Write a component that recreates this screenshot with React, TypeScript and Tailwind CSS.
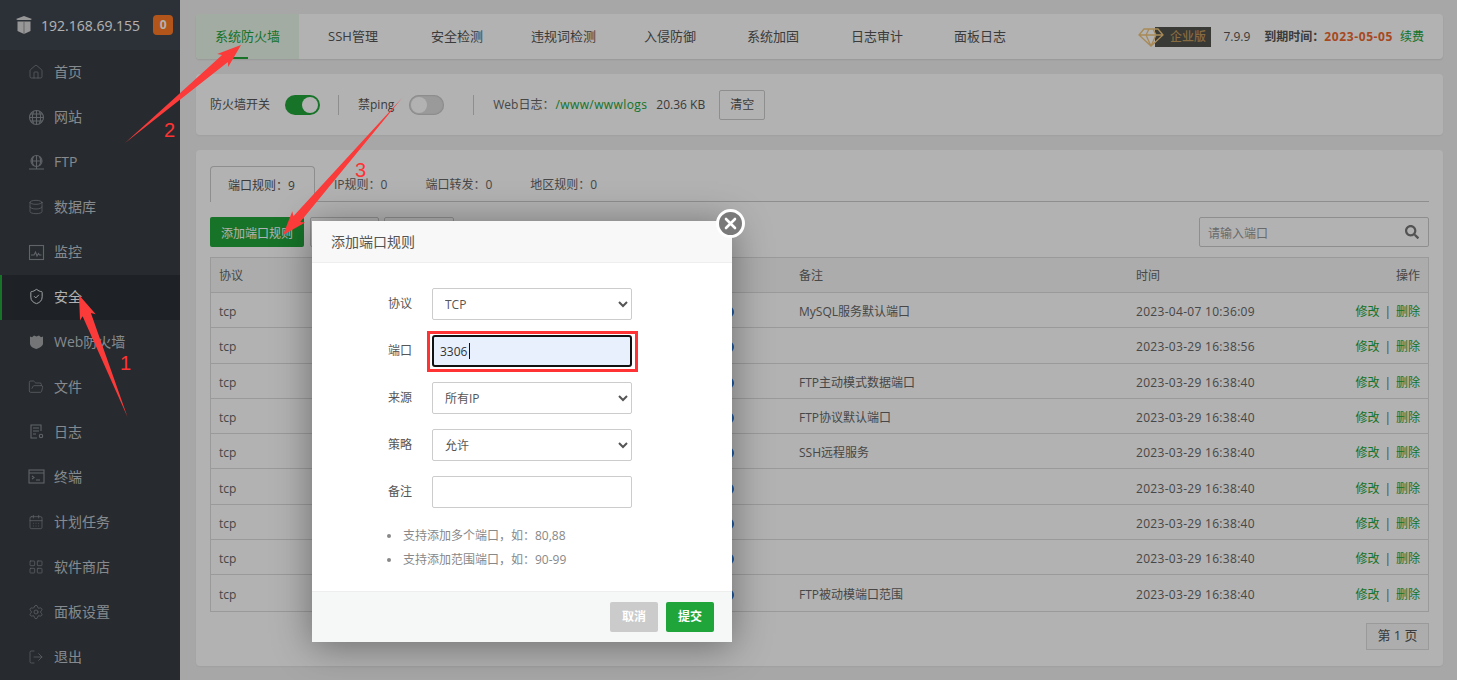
import React from "react";
import { Home, Globe, Database, ShieldCheck, FolderOpen, CalendarDays, LayoutGrid, Settings, LogOut } from "lucide-react";
import { FaSearch } from "react-icons/fa";

const ic = { size: 16, strokeWidth: 1.1, color: "#8a9097" };

const S = ({ children }: { children: React.ReactNode }) => (
  <svg width="17" height="17" viewBox="0 0 17 17" fill="none" stroke="#8a9097" strokeWidth="1.1">{children}</svg>
);

const nav: [React.ReactNode, string, boolean?][] = [
  [<Home {...ic} />, "首页"],
  [<S><circle cx="8.5" cy="8.5" r="7" /><path d="M1.500 8.500h14M8.500 1.500v14M2.500 5h12M2.500 12h12M5.500 2.500c-1.500 4-1.500 8 0 12M11.500 2.500c1.500 4 1.500 8 0 12" /></S>, "网站"],
  [<S><circle cx="8.5" cy="7" r="5.5" /><path d="M3 7h11M8.500 1.500v11M5.500 2.500c-1.500 3-1.500 6 0 9M11.500 2.500c1.500 3 1.500 6 0 9M1 15h15M8.500 12.500V15" /></S>, "FTP"],
  [<Database {...ic} />, "数据库"],
  [<S><rect x="1.5" y="1.5" width="14" height="14" /><path d="M3 11h3l1.500-3 1.500 4 1.500-2.500 1 1.500h2" /></S>, "监控"],
  [<ShieldCheck size={17} strokeWidth={1.4} color="#e8ecef" />, "安全", true],
  [<svg width="17" height="17" viewBox="0 0 17 17" fill="#a6a8aa"><path d="M2 3.500 4 4.200 6 2.500l2.500 1L11 2.500l2 1.700 2-.7v7c0 2.500-3.500 4.500-6.500 5.500C5.500 15.500 2 13.500 2 10.500z" /></svg>, "Web防火墙"],
  [<FolderOpen {...ic} />, "文件"],
  [<S><path d="M13 8V2H3v13h6M5 5h6M5 8h6M5 11h3" /><circle cx="13" cy="13" r="1.700" /></S>, "日志"],
  [<S><rect x="1" y="2" width="15" height="13" /><path d="M1 5h15M4 8l2 1.500-2 1.500M8 12h4" /></S>, "终端"],
  [<CalendarDays {...ic} />, "计划任务"],
  [<LayoutGrid {...ic} />, "软件商店"],
  [<Settings {...ic} />, "面板设置"],
  [<LogOut {...ic} />, "退出"],
];

const topTabs: [string, string][] = [
  ["系统防火墙", "w-[103px]"],
  ["SSH管理", "w-[108px]"],
  ["安全检测", "w-[100px]"],
  ["违规词检测", "w-[113px]"],
  ["入侵防御", "w-[100px]"],
  ["系统加固", "w-[106px]"],
  ["日志审计", "w-[102px]"],
  ["面板日志", "w-[104px]"],
];

const rows: [string, string][] = [
  ["MySQL服务默认端口", "2023-04-07 10:36:09"],
  ["", "2023-03-29 16:38:56"],
  ["FTP主动模式数据端口", "2023-03-29 16:38:40"],
  ["FTP协议默认端口", "2023-03-29 16:38:40"],
  ["SSH远程服务", "2023-03-29 16:38:40"],
  ["", "2023-03-29 16:38:40"],
  ["", "2023-03-29 16:38:40"],
  ["", "2023-03-29 16:38:40"],
  ["FTP被动模端口范围", "2023-03-29 16:38:40"],
];

const cols = "grid grid-cols-[100px_200px_280px_337px_160px_1fr] items-center";

function arrow(tx: number, ty: number, hx: number, hy: number, headLen: number, headW: number, neck: number) {
  const d = Math.hypot(hx - tx, hy - ty);
  const ux = (hx - tx) / d, uy = (hy - ty) / d;
  const nx = -uy, ny = ux;
  const p = (along: number, side: number) => `${(hx - ux * along + nx * side).toFixed(1)},${(hy - uy * along + ny * side).toFixed(1)}`;
  return [`${tx},${ty}`, p(headLen - 3, neck / 2), p(headLen, headW / 2), `${hx},${hy}`, p(headLen, -headW / 2), p(headLen - 3, -neck / 2)].join(" ");
}

const Field = ({ label, children }: { label: string; children: React.ReactNode }) => (
  <div className="flex items-center">
    <label className="w-[100px] text-right text-[12px] text-[#555]">{label}</label>
    <div className="relative ml-[20px] h-[32px] w-[200px]">{children}</div>
  </div>
);

const selectCls = "h-[32px] w-[200px] rounded-[2px] border border-[#ccc] bg-white pl-[8px] text-[12px] text-[#555]";

export default function App() {
  return (
    <div className="relative flex h-[680px] w-[1457px] overflow-hidden bg-[#f0f0f0] font-['Open_Sans','Noto_Sans_CJK_SC',sans-serif] text-[12px] text-[#666]">
      <aside className="w-[180px] shrink-0 bg-[#383e44]">
        <div className="flex h-[50px] items-center bg-[#404650] pl-[15px]">
          <svg width="18" height="20" viewBox="0 0 18 20" fill="#d8d8d8">
            <path d="M1 4 9 1l8 3-1.500 1H2.500zM2.500 6.500h13V16L9 19l-6.500-3z" />
            <path d="M9 6.500V19" stroke="#7a7a7a" strokeWidth=".7" />
          </svg>
          <span className="ml-[8px] text-[14px] text-white">192.168.69.155</span>
          <span className="ml-[13px] flex h-[20px] w-[20px] items-center justify-center rounded-[4px] bg-[#ff7a26] text-[12px] font-bold text-white">0</span>
        </div>
        <nav className="flex flex-col">
          {nav.map(([icon, text, active]) => (
            <div key={text} className={active ? "flex h-[44.500px] items-center border-l-2 border-[#20a53a] bg-[#2b3035] pl-[26px]" : "flex h-[45px] items-center pl-[28px]"}>
              <span className="flex w-[26px] items-center pb-[1px]">{icon}</span>
              <span className={active ? "pb-[2px] text-[14px] text-white" : "pb-[2px] text-[14px] text-[#c0c6cc]"}>{text}</span>
            </div>
          ))}
        </nav>
      </aside>

      <main className="flex min-w-0 flex-1 flex-col gap-[15px] pl-[16px] pr-[14px] pt-[14px]">
        <section className="flex h-[45px] items-center rounded-[4px] bg-white shadow-[0_1px_2px_rgba(0,0,0,0.1)]">
          {topTabs.map(([t, w], i) => (
            <div key={t} className={i === 0 ? `relative flex h-full items-center justify-center rounded-l-[4px] bg-[#e8f6ea] text-[13px] text-[#20a53a] ${w}` : `flex h-full items-center justify-center text-[13px] text-[#555] ${w}`}>
              {t}
              {i === 0 && <span className="absolute bottom-0 left-[32px] h-[2px] w-[20px] bg-[#20a53a]" />}
            </div>
          ))}
          <div className="ml-auto flex items-center pr-[19px]">
            <div className="relative flex items-center">
              <svg className="relative z-10" width="26" height="20" viewBox="0 0 26 20" fill="none" stroke="#a88a58" strokeWidth="1.300">
                <path d="M6 2h14l5 6-12 11L1 8zM1 8h24M8 8l5 11 5-11-3-6h-4z" />
              </svg>
              <span className="ml-[-9px] flex h-[20px] w-[56px] items-center justify-center bg-[#52524c] pl-[9px] text-[12px] font-medium text-[#c09a5c]">企业版</span>
            </div>
            <span className="ml-[12px] text-[#555]">7.9.9</span>
            <span className="ml-[14px] font-bold text-[#555]">到期时间：</span>
            <span className="font-bold tracking-[0.6px] text-[#f0682e]">2023-05-05</span>
            <span className="ml-[7px] text-[#20a53a]">续费</span>
          </div>
        </section>

        <section className="flex h-[61px] items-center rounded-[4px] bg-white pl-[14px] shadow-[0_1px_2px_rgba(0,0,0,0.05)]">
          <span className="text-[#555]">防火墙开关</span>
          <span className="ml-[15px] flex h-[20px] w-[35px] items-center justify-end rounded-full bg-[#20a53a] pr-[2px]">
            <span className="h-[16px] w-[16px] rounded-full bg-white" />
          </span>
          <span className="ml-[18px] h-[20px] w-px bg-[#ccc]" />
          <span className="ml-[19px] text-[#555]">禁ping</span>
          <span className="ml-[15px] flex h-[20px] w-[35px] items-center rounded-full bg-[#ddd] pl-[2px] shadow-[inset_0_0_2px_rgba(0,0,0,0.3)]">
            <span className="h-[16px] w-[16px] rounded-full bg-white" />
          </span>
          <span className="ml-[29px] h-[20px] w-px bg-[#ccc]" />
          <span className="ml-[19px] text-[#666]">Web日志：</span>
          <span className="ml-[1px] tracking-[0.4px] text-[#20a53a]">/www/wwwlogs</span>
          <span className="ml-[9px] text-[#555]">20.36 KB</span>
          <button className="ml-[14px] h-[30px] w-[46px] rounded-[2px] border border-[#ccc] text-[12px] text-[#555]">清空</button>
        </section>

        <section className="h-[516px] rounded-[4px] bg-white px-[14px] pt-[16px] shadow-[0_1px_2px_rgba(0,0,0,0.05)]">
          <div className="flex h-[36px] border-b border-[#ccc]">
            <div className="mb-[-1px] flex h-[36px] w-[105px] items-center justify-center rounded-t-[4px] border border-b-0 border-[#ccc] bg-white pr-[2px] pt-[3px] text-[#555]">端口规则：9</div>
            <div className="flex items-center px-[19px] pt-[3px]">IP规则：0</div>
            <div className="flex items-center px-[19px] pt-[3px]">端口转发：0</div>
            <div className="flex items-center px-[19px] pt-[3px]">地区规则：0</div>
          </div>

          <div className="mt-[15px] flex h-[30px]">
            <button className="h-[30px] w-[94px] rounded-[2px] bg-[#20a53a] pt-[3px] text-[12px] text-white">添加端口规则</button>
            <span className="ml-[6px] h-[30px] w-[69px] rounded-[2px] border border-[#ccc]" />
            <span className="ml-[5px] h-[30px] w-[70px] rounded-[2px] border border-[#ccc]" />
            <div className="ml-auto flex h-[30px] w-[230px] items-center justify-between rounded-[2px] border border-[#ccc] pl-[8px] pr-[9px]">
              <span className="pt-[3px] text-[#999]">请输入端口</span>
              <FaSearch size={14} color="#777" />
            </div>
          </div>

          <div className="mt-[10px] border border-[#ddd]">
            <div className={`${cols} h-[35px] border-b border-[#ddd] bg-[#f6f6f6] pt-[2px] text-[#666]`}>
              <span className="pl-[8px]">协议</span>
              <span />
              <span />
              <span className="pl-[8px]">备注</span>
              <span className="pl-[8px]">时间</span>
              <span className="pr-[8px] text-right">操作</span>
            </div>
            {rows.map(([note, time], i) => (
              <div key={i} className={`${cols} h-[35.300px] border-b border-[#ddd] pt-[4px] last:border-b-0`}>
                <span className="pl-[8px]">tcp</span>
                <span />
                <span className="flex justify-end pr-[57px]"><span className="h-[12px] w-[12px] rounded-full bg-[#2a7be0]" /></span>
                <span className="pl-[8px]">{note}</span>
                <span className="pl-[8px] tracking-[0.3px]">{time}</span>
                <span className="pr-[8px] text-right text-[#20a53a]">修改<span className="mx-[5px] text-[#666]">|</span>删除</span>
              </div>
            ))}
          </div>

          <div className="mt-[11px] flex justify-end">
            <span className="flex h-[27px] w-[63px] items-center justify-center border border-[#ddd] bg-[#f8f8f8] pb-[1px] text-[13px] text-[#555]">第 1 页</span>
          </div>
        </section>
      </main>

      <div className="absolute inset-0 bg-black/30" />

      <div className="absolute left-[312px] top-[221px] flex h-[421px] w-[420px] flex-col bg-white shadow-[0_4px_36px_rgba(0,0,0,0.4)]">
        <div className="flex h-[42px] items-center border-b border-[#eee] bg-[#f8f8f8] pl-[19px] text-[14px] text-[#555]">添加端口规则</div>
        <div className="flex flex-col gap-[15px] pt-[25px]">
          <Field label="协议">
            <select className={selectCls} defaultValue="TCP"><option>TCP</option></select>
          </Field>
          <Field label="端口">
            <input readOnly value="3306" className="h-[32px] w-[200px] rounded-[3px] border-2 border-[#111] bg-[#e8f0fe] pl-[6px] text-[12px] text-[#333] outline-none" />
            <span className="absolute left-[37px] top-[8px] h-[16px] w-px bg-[#111]" />
            <span className="absolute left-[-5px] top-[-4px] h-[41px] w-[211px] border-[3px] border-[#f33]" />
          </Field>
          <Field label="来源">
            <select className={selectCls} defaultValue="所有IP"><option>所有IP</option></select>
          </Field>
          <Field label="策略">
            <select className={selectCls} defaultValue="允许"><option>允许</option></select>
          </Field>
          <Field label="备注">
            <input readOnly className="h-[32px] w-[200px] rounded-[2px] border border-[#ccc] bg-white" />
          </Field>
        </div>
        <ul className="mt-[16px] text-[12px] text-[#888]">
          <li className="flex h-[24px] items-center pl-[75px]"><span className="mr-[12px] h-[4px] w-[4px] rounded-full bg-[#888]" />支持添加多个端口，如：80,88</li>
          <li className="flex h-[24px] items-center pl-[75px]"><span className="mr-[12px] h-[4px] w-[4px] rounded-full bg-[#888]" />支持添加范围端口，如：90-99</li>
        </ul>
        <div className="mt-auto flex h-[51px] items-center justify-end gap-[8px] border-t border-[#eee] bg-[#f6f8f8] pr-[18px]">
          <button className="h-[30px] w-[48px] rounded-[2px] bg-[#cbcbcb] text-[12px] font-bold text-white">取消</button>
          <button className="h-[30px] w-[48px] rounded-[2px] bg-[#20a53a] text-[12px] font-bold text-white">提交</button>
        </div>
        <span className="absolute left-[404px] top-[-12px] flex h-[29px] w-[29px] items-center justify-center rounded-full border-[3px] border-white bg-[#7a7a7a]">
          <svg width="13" height="13" viewBox="0 0 13 13" stroke="#fff" strokeWidth="2.600" strokeLinecap="round"><path d="M2 2l9 9M11 2l-9 9" /></svg>
        </span>
      </div>

      <svg className="pointer-events-none absolute left-0 top-0" width="1457" height="680" fill="#fb3a3a">
        <polygon points={arrow(127.5, 417, 79, 295, 24, 17, 9)} />
        <polygon points={arrow(125, 143, 241, 45, 24, 17, 9)} />
        <polygon points={arrow(402, 98, 283, 235, 24, 17, 9)} />
      </svg>
      <span className="absolute left-[120px] top-[351px] font-['Liberation_Sans',sans-serif] text-[20px] leading-[24px] text-[#f33]">1</span>
      <span className="absolute left-[164px] top-[118px] font-['Liberation_Sans',sans-serif] text-[20px] leading-[24px] text-[#f33]">2</span>
      <span className="absolute left-[355px] top-[158px] font-['Liberation_Sans',sans-serif] text-[20px] leading-[24px] text-[#f33]">3</span>
    </div>
  );
}
